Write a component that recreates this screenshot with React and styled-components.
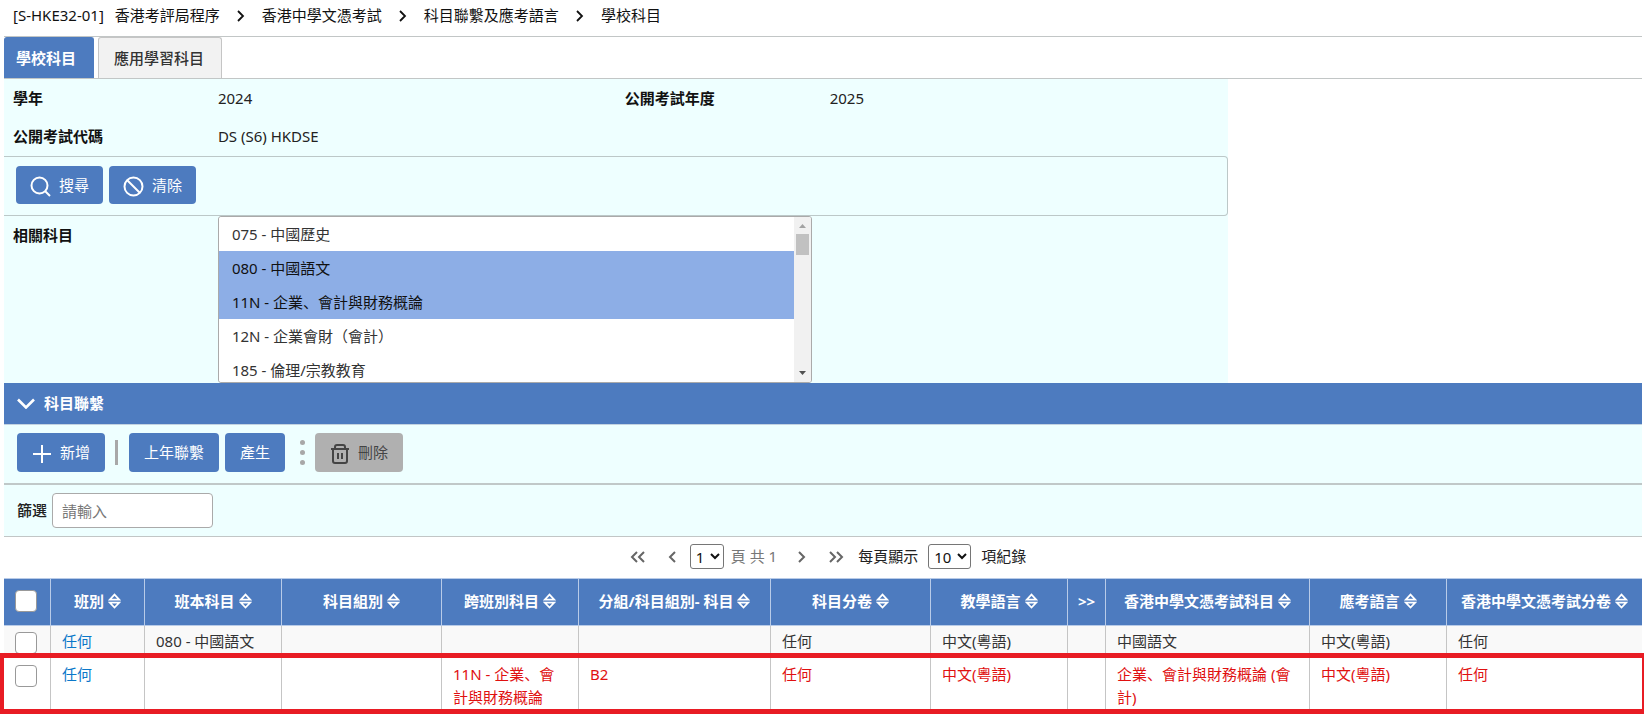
import React, { useState } from "react";
import styled, { createGlobalStyle } from "styled-components";

const GlobalStyle = createGlobalStyle`
    *{ box-sizing: border-box; }
    body{
        margin: 0;
        overflow-x: hidden;
        background-color: #fff;
        color: #222;
        font-family: "Noto Sans", "Noto Sans CJK SC", sans-serif;
        font-size: 15px;
        line-height: 23px;
    }
    button, input, select{
        font-family: inherit;
        font-size: inherit;
        line-height: inherit;
        margin: 0;
    }
`;

const Page = styled.div`
    padding: 0 2px 8px 4px;
`;

const Breadcrumb = styled.nav`
    display: flex;
    align-items: center;
    gap: 17px;
    height: 36px;
    padding: 0 9px 5px;
    color: #111;
    white-space: nowrap;
`;
const ProgramId = styled.span`
    margin-right: -6px;
`;

const TabBar = styled.div`
    display: flex;
    gap: 4px;
    height: 43px;
    border-top: 1px solid #c2c6c6;
    border-bottom: 1px solid #c2c6c6;
`;
const Tab = styled.button`
    padding: 0 ${props => props.$active ? "17px 0 11px" : "17px 0 15px"};
    border: 1px solid ${props => props.$active ? "#4d7bbf" : "#c5c5c5"};
    border-bottom: none;
    border-radius: 3px 3px 0 0;
    background-color: ${props => props.$active ? "#4d7bbf" : "#f2f2f2"};
    color: ${props => props.$active ? "#fff" : "#333"};
    font-weight: ${props => props.$active ? 700 : 500};
    cursor: pointer;
`;

const SearchForm = styled.form`
    width: calc(75% - 5px);
    background-color: #eeffff;
`;
const FormGrid = styled.div`
    display: grid;
    grid-template-columns: 1fr 2fr 1fr 2fr;
    row-gap: 15px;
    padding: ${props => props.$flush ? "0" : "8px 0"};
    color: #222;
`;
const FieldName = styled.label`
    padding: ${props => props.$top ? "8px" : "0"} 0 0 9px;
    color: #111;
    font-weight: 700;
`;
const FieldValue = styled.span`
    padding-left: 10px;
`;
const ListCell = styled.div`
    grid-column: span 3;
    padding-left: 10px;
`;
const ListBox = styled.div`
    display: flex;
    width: 594px;
    max-width: 100%;
    height: 167px;
    border: 1px solid #aaa;
    border-radius: 3px;
    background-color: #fff;
    overflow: hidden;
`;
const SubjectList = styled.select`
    flex: 1;
    min-width: 0;
    height: 165px;
    padding: 0;
    border: none;
    background-color: #fff;
    outline: none;
    overflow-y: scroll;
    scrollbar-width: none;

    option{
        min-height: 34px;
        padding: 6px 13px 5px;
        line-height: 23px;
        color: #333;
    }
    option:checked{
        background: #8daee6 linear-gradient(#8daee6, #8daee6);
        color: #111;
    }
`;
const ScrollBar = styled.div`
    display: flex;
    flex-direction: column;
    align-items: center;
    width: 17px;
    padding: 6px 0;
    background-color: #f1f1f1;
`;
const ScrollThumb = styled.div`
    width: 13px;
    height: 21px;
    margin: 5px 0 auto;
    background-color: #c1c1c1;
`;

const ActionBar = styled.div`
    display: flex;
    align-items: center;
    gap: 6px;
    height: 60px;
    padding: 0 12px 2px;
    border: 1px solid #bcc8c8;
    border-left: none;
    border-radius: 0 4px 4px 0;
`;
const Button = styled.button`
    display: inline-flex;
    align-items: center;
    gap: 8px;
    height: ${props => props.$short ? "38px" : "39px"};
    padding: 0 ${props => props.$short ? "14px" : "15px"};
    border: none;
    border-radius: 4px;
    background-color: ${props => props.disabled ? "#b0b0b0" : "#4d7bbf"};
    color: ${props => props.disabled ? "#444" : "#fff"};
    white-space: nowrap;

    svg{ margin-top: 3px; }
`;

const SectionHead = styled.button`
    display: flex;
    align-items: center;
    gap: 9px;
    width: 100%;
    height: 42px;
    padding: 0 13px;
    border: none;
    border-bottom: 1px solid #c2d2e0;
    background-color: #4d7bbf;
    color: #fff;
    font-weight: 700;
`;
const ToolBar = styled.div`
    display: flex;
    align-items: center;
    gap: 6px;
    height: 60px;
    padding: 0 13px 4px;
    border-bottom: 2px solid #c0c8c8;
    background-color: #eeffff;
`;
const Divider = styled.span`
    width: 3px;
    height: 25px;
    margin: 0 5px 0 4px;
    background-color: #a8a8a8;
`;
const Dots = styled.span`
    display: flex;
    flex-direction: column;
    gap: 5px;
    margin: 0 4px 0 9px;

    i{
        width: 5px;
        height: 5px;
        border-radius: 50%;
        background-color: #a8a8a8;
    }
`;
const FilterBar = styled.div`
    display: flex;
    align-items: center;
    gap: 5px;
    height: 52px;
    padding: 0 13px;
    border-bottom: 1px solid #c2c6c6;
    background-color: #eeffff;

    label{ font-weight: 500; }
`;
const TextInput = styled.input`
    width: 161px;
    height: 35px;
    padding: 0 9px;
    border: 1px solid #aaa;
    border-radius: 4px;
    background-color: #fff;

    &::placeholder{ color: #777; }
`;

const Pager = styled.div`
    display: flex;
    align-items: center;
    justify-content: center;
    height: 41px;
    padding-bottom: 2px;
    white-space: nowrap;
`;
const PageButton = styled.button`
    display: flex;
    align-items: center;
    justify-content: center;
    width: 35px;
    height: 24px;
    padding: 0;
    border: none;
    background: none;
    color: #666;
`;
const PageInfo = styled.span`
    margin: 0 7px;
    color: #777;
`;
const SmallSelect = styled.select`
    width: ${props => props.$wide ? "43px" : "34px"};
    height: 25px;
    padding: 0 0 0 1px;
    border: 1px solid #767676;
    border-radius: 3px;
    background-color: #fff;
    color: #111;
`;
const PerPage = styled.label`
    display: flex;
    align-items: center;
    gap: 10px;
    margin-left: 4px;
`;

const Table = styled.table`
    width: 100%;
    table-layout: fixed;
    border-collapse: separate;
    border-spacing: 0;
    border-top: 1px solid #b8cbe8;
`;
const Th = styled.th`
    height: 47px;
    padding: 0 11px 2px;
    border-bottom: 1px solid #b8cbe8;
    border-right: 1px solid #b8cbe8;
    background-color: #4d7bbf;
    color: #fff;
    font-weight: 700;
    white-space: nowrap;

    &:last-child{ border-right: none; }
`;
const SortLabel = styled.span`
    display: flex;
    align-items: center;
    justify-content: center;
    gap: 4px;
`;
const Row = styled.tr`
    background-color: ${props => props.$marked ? "#fff" : "#f9f9f9"};
    outline: ${props => props.$marked ? "5px solid #e81c24" : "none"};
`;
const Td = styled.td`
    height: ${props => props.$marked ? "51px" : "32px"};
    padding: ${props => props.$marked ? "5px 11px 0" : "4px 11px"};
    border-right: 1px solid #c5c5c5;
    color: ${props => props.$marked ? "#e01010" : "#333"};
    line-height: 23px;
    vertical-align: top;

    &:last-child{ border-right: none; }
    a{
        color: #0b78c9;
        text-decoration: none;
    }
`;
const CheckCell = styled.span`
    display: flex;
    height: 22px;

    td &{ margin-top: 2px; }
`;
const Checkbox = styled.input`
    appearance: none;
    width: 22px;
    height: 22px;
    border: 1px solid #999;
    border-radius: 4px;
    background-color: #fff;

    &:checked{ background-color: #4d7bbf; }
`;

const SearchIcon = () => (
    <svg width="21" height="21" viewBox="0 0 21 21" fill="none" stroke="currentColor" strokeWidth="2">
        <circle cx="9.5" cy="9.5" r="8" />
        <path d="M15 15l5 5" />
    </svg>
);
const ClearIcon = () => (
    <svg width="21" height="21" viewBox="0 0 21 21" fill="none" stroke="currentColor" strokeWidth="2">
        <circle cx="10.5" cy="10.5" r="9" />
        <path d="M4 4l13 13" />
    </svg>
);
const PlusIcon = () => (
    <svg width="20" height="20" viewBox="0 0 20 20" stroke="currentColor" strokeWidth="2">
        <path d="M10 1v18M1 10h18" />
    </svg>
);
const TrashIcon = () => (
    <svg width="20" height="20" viewBox="0 0 20 20" fill="none" stroke="currentColor" strokeWidth="2">
        <path d="M1 5h18M3 5v12q0 2 2 2h10q2 0 2-2V5M5 5V3q0-2 2-2h6q2 0 2 2v2M8 9v6M12 9v6" />
    </svg>
);
const DownIcon = () => (
    <svg width="18" height="11" viewBox="0 0 18 11" fill="none" stroke="currentColor" strokeWidth="2.6">
        <path d="M1 1.5l8 8 8-8" />
    </svg>
);
const SortIcon = () => (
    <svg width="13" height="16" viewBox="0 0 13 16" fill="none" stroke="currentColor" strokeWidth="1.7">
        <path d="M1.8 6.6L6.5 1.6l4.7 5zM1.8 9.6l4.7 5 4.7-5z" />
    </svg>
);
// left / right arrows, single or double
const Arrow = ({ left, double, weight = 2 }) => {
    const w = double ? 15 : 8;
    return (
        <svg width={w} height="12" viewBox={`0 0 ${w} 12`} fill="none" stroke="currentColor" strokeWidth={weight}>
            {left ? <path d="M7 1L2 6l5 5" /> : <path d="M1 1l5 5-5 5" />}
            {double && (left ? <path d="M14 1L9 6l5 5" /> : <path d="M8 1l5 5-5 5" />)}
        </svg>
    );
};
const ScrollArrow = ({ down }) => (
    <svg width="7" height="6" viewBox="0 0 7 6" fill={down ? "#505050" : "#a3a3a3"}>
        {down ? <path d="M0 1h7L3.5 5z" /> : <path d="M0 5h7L3.5 1z" />}
    </svg>
);

const crumbs = ["香港考評局程序", "香港中學文憑考試", "科目聯繫及應考語言", "學校科目"];

const subjects = [
    "075 - 中國歷史", "080 - 中國語文", "11N - 企業、會計與財務概論", "12N - 企業會財（會計）",
    "185 - 倫理/宗教教育", "045 - 生物", "070 - 化學", "110 - 經濟", "165 - 英國語文", "210 - 地理",
    "235 - 歷史", "240 - 家政", "260 - 資訊科技", "310 - 文學", "315 - 物理", "320 - 數學", "350 - 音樂",
    "360 - 體育", "380 - 通識教育", "390 - 視覺藝術", "400 - 科學", "410 - 普通話", "420 - 旅遊與款待",
    "430 - 設計與科技", "440 - 健康管理", "450 - 公民與社會發展", "460 - 法文", "470 - 日文", "480 - 德文",
];

const columns = [
    { name: "班別", width: 94 },
    { name: "班本科目", width: 137 },
    { name: "科目組別", width: 160 },
    { name: "跨班別科目", width: 137 },
    { name: "分組/科目組別- 科目", width: 192 },
    { name: "科目分卷", width: 160 },
    { name: "教學語言", width: 137 },
    { name: ">>", width: 38, noSort: true },
    { name: "香港中學文憑考試科目", width: 204 },
    { name: "應考語言", width: 137 },
    { name: "香港中學文憑考試分卷", width: 195 },
];

const rows = [
    { marked: false, cells: ["任何", "080 - 中國語文", "", "", "", "任何", "中文(粵語)", "", "中國語文", "中文(粵語)", "任何"] },
    { marked: true, cells: ["任何", "", "", "11N - 企業、會計與財務概論", "B2", "任何", "中文(粵語)", "", "企業、會計與財務概論 (會計)", "中文(粵語)", "任何"] },
];

const LinkTable = () => (
    <Table>
        <colgroup>
            <col width="47" />
            {columns.map(col => <col key={col.name} width={col.width} />)}
        </colgroup>
        <thead>
            <tr>
                <Th><CheckCell><Checkbox type="checkbox" aria-label="全選" /></CheckCell></Th>
                {columns.map(col => (
                    <Th key={col.name}>
                        <SortLabel>{col.name}{!col.noSort && <SortIcon />}</SortLabel>
                    </Th>
                ))}
            </tr>
        </thead>
        <tbody>
            {rows.map((row, i) => (
                <Row key={i} $marked={row.marked}>
                    <Td $marked={row.marked}>
                        <CheckCell><Checkbox type="checkbox" aria-label={`選取 ${i + 1}`} /></CheckCell>
                    </Td>
                    {row.cells.map((text, j) => (
                        <Td key={j} $marked={row.marked}>{j === 0 ? <a href="#edit">{text}</a> : text}</Td>
                    ))}
                </Row>
            ))}
        </tbody>
    </Table>
);

const App = () => {
    const [picked, setPicked] = useState([subjects[1], subjects[2]]);

    const onPick = (e) => {
        setPicked(Array.from(e.target.selectedOptions).map(o => o.value));
    }

    return (
        <Page>
            <GlobalStyle />
            <Breadcrumb>
                <ProgramId>[S-HKE32-01]</ProgramId>
                {crumbs.map((name, i) => (
                    <React.Fragment key={name}>
                        {i > 0 && <Arrow weight={1.8} />}
                        <span>{name}</span>
                    </React.Fragment>
                ))}
            </Breadcrumb>
            <TabBar role="tablist">
                <Tab role="tab" $active>學校科目</Tab>
                <Tab role="tab">應用學習科目</Tab>
            </TabBar>

            <SearchForm onSubmit={e => e.preventDefault()}>
                <FormGrid>
                    <FieldName as="span">學年</FieldName><FieldValue>2024</FieldValue>
                    <FieldName as="span">公開考試年度</FieldName><FieldValue>2025</FieldValue>
                    <FieldName as="span">公開考試代碼</FieldName><FieldValue>DS (S6) HKDSE</FieldValue>
                </FormGrid>
                <ActionBar>
                    <Button type="submit" $short><SearchIcon />搜尋</Button>
                    <Button type="reset" $short><ClearIcon />清除</Button>
                </ActionBar>
                <FormGrid $flush>
                    <FieldName htmlFor="subjects" $top>相關科目</FieldName>
                    <ListCell>
                        <ListBox>
                            <SubjectList id="subjects" multiple size={5} value={picked} onChange={onPick}>
                                {subjects.map(s => <option key={s} value={s}>{s}</option>)}
                            </SubjectList>
                            <ScrollBar>
                                <ScrollArrow />
                                <ScrollThumb />
                                <ScrollArrow down />
                            </ScrollBar>
                        </ListBox>
                    </ListCell>
                </FormGrid>
            </SearchForm>

            <SectionHead><DownIcon />科目聯繫</SectionHead>
            <ToolBar>
                <Button><PlusIcon />新增</Button>
                <Divider />
                <Button>上年聯繫</Button>
                <Button>產生</Button>
                <Dots><i /><i /><i /></Dots>
                <Button disabled><TrashIcon />刪除</Button>
            </ToolBar>
            <FilterBar>
                <label htmlFor="filter">篩選</label>
                <TextInput id="filter" type="text" placeholder="請輸入" />
            </FilterBar>

            <Pager>
                <PageButton aria-label="第一頁"><Arrow left double /></PageButton>
                <PageButton aria-label="上一頁"><Arrow left /></PageButton>
                <SmallSelect aria-label="頁" defaultValue="1"><option>1</option></SmallSelect>
                <PageInfo>頁 共 1</PageInfo>
                <PageButton aria-label="下一頁"><Arrow /></PageButton>
                <PageButton aria-label="最後一頁"><Arrow double /></PageButton>
                <PerPage>
                    每頁顯示
                    <SmallSelect $wide defaultValue="10"><option>10</option><option>20</option></SmallSelect>
                    項紀錄
                </PerPage>
            </Pager>
            <LinkTable />
        </Page>
    );
}

export default App;
